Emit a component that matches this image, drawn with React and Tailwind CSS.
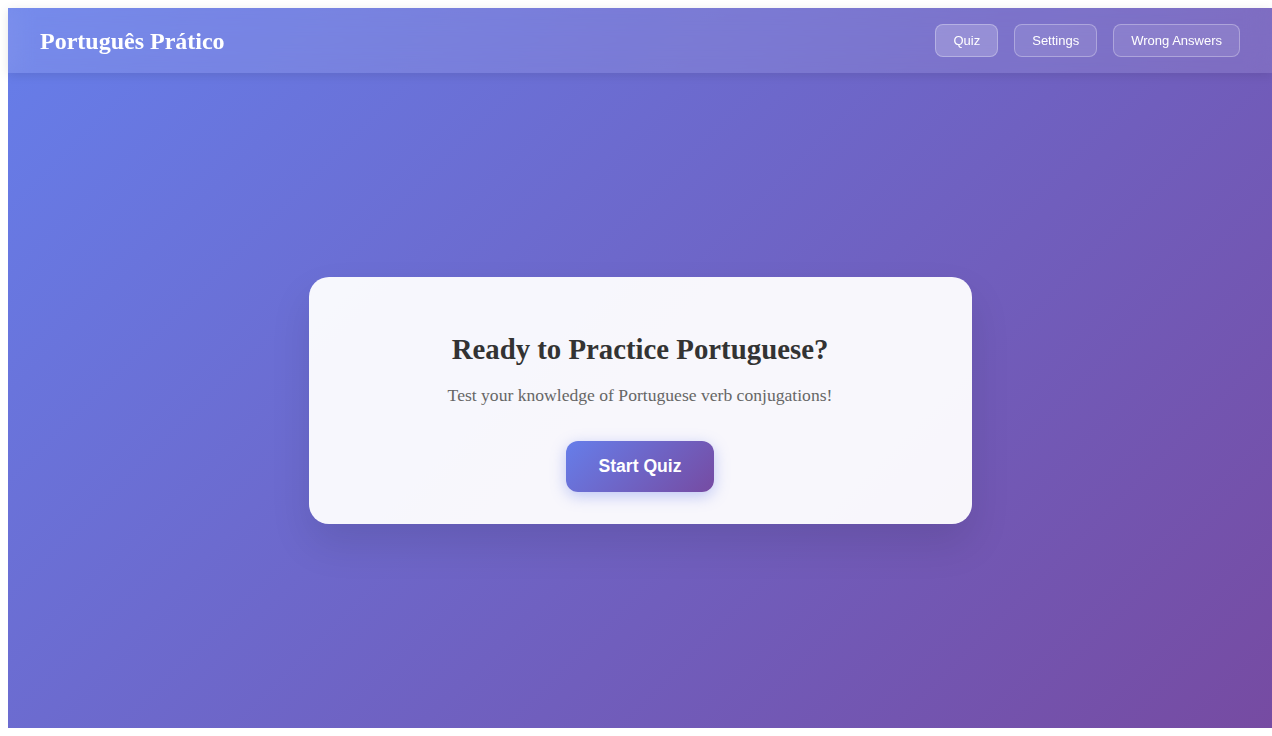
import React from "react";

export default function App() {
  return (
    <div className="pl-2 pt-2 pb-2 bg-white">
      <div
        className="h-[720px] w-full flex flex-col bg-[linear-gradient(135deg,#667eea_0%,#764ba2_100%)]"
        style={{ fontFamily: '"Liberation Sans", Arial, sans-serif' }}
      >
        <header className="h-[65px] shrink-0 flex items-center justify-between px-8 bg-white/10 backdrop-blur-md shadow-[0_2px_10px_rgba(0,0,0,0.1)]">
          <h1
            className="text-[24px] font-bold text-white leading-none"
            style={{ fontFamily: '"Liberation Serif", "Times New Roman", serif' }}
          >
            Português Prático
          </h1>
          <nav className="flex items-center gap-4">
            <button className="px-[17px] py-2 text-[13px] leading-[15px] text-white rounded-lg border border-white/30 bg-white/20">
              Quiz
            </button>
            <button className="px-[17px] py-2 text-[13px] leading-[15px] text-white rounded-lg border border-white/30 bg-white/10">
              Settings
            </button>
            <button className="px-[17px] py-2 text-[13px] leading-[15px] text-white rounded-lg border border-white/30 bg-white/10">
              Wrong Answers
            </button>
          </nav>
        </header>
        <main className="flex-1 flex items-center justify-center">
          <div className="w-[663px] rounded-[20px] bg-white/95 shadow-[0_20px_40px_rgba(0,0,0,0.1)] pt-[55px] pb-8 px-12 flex flex-col items-center text-center">
            <h2
              className="text-[28.8px] leading-[34px] font-bold text-[#333]"
              style={{ fontFamily: '"Liberation Serif", "Times New Roman", serif' }}
            >
              Ready to Practice Portuguese?
            </h2>
            <p
              className="mt-4 text-[17.6px] leading-[27px] text-[#666]"
              style={{ fontFamily: '"Liberation Serif", "Times New Roman", serif' }}
            >
              Test your knowledge of Portuguese verb conjugations!
            </p>
            <button className="mt-8 px-8 py-4 text-[17.6px] leading-[19px] font-bold text-white rounded-xl bg-[linear-gradient(135deg,#667eea_0%,#764ba2_100%)] shadow-[0_4px_15px_rgba(102,126,234,0.4)]">
              Start Quiz
            </button>
          </div>
        </main>
      </div>
    </div>
  );
}
